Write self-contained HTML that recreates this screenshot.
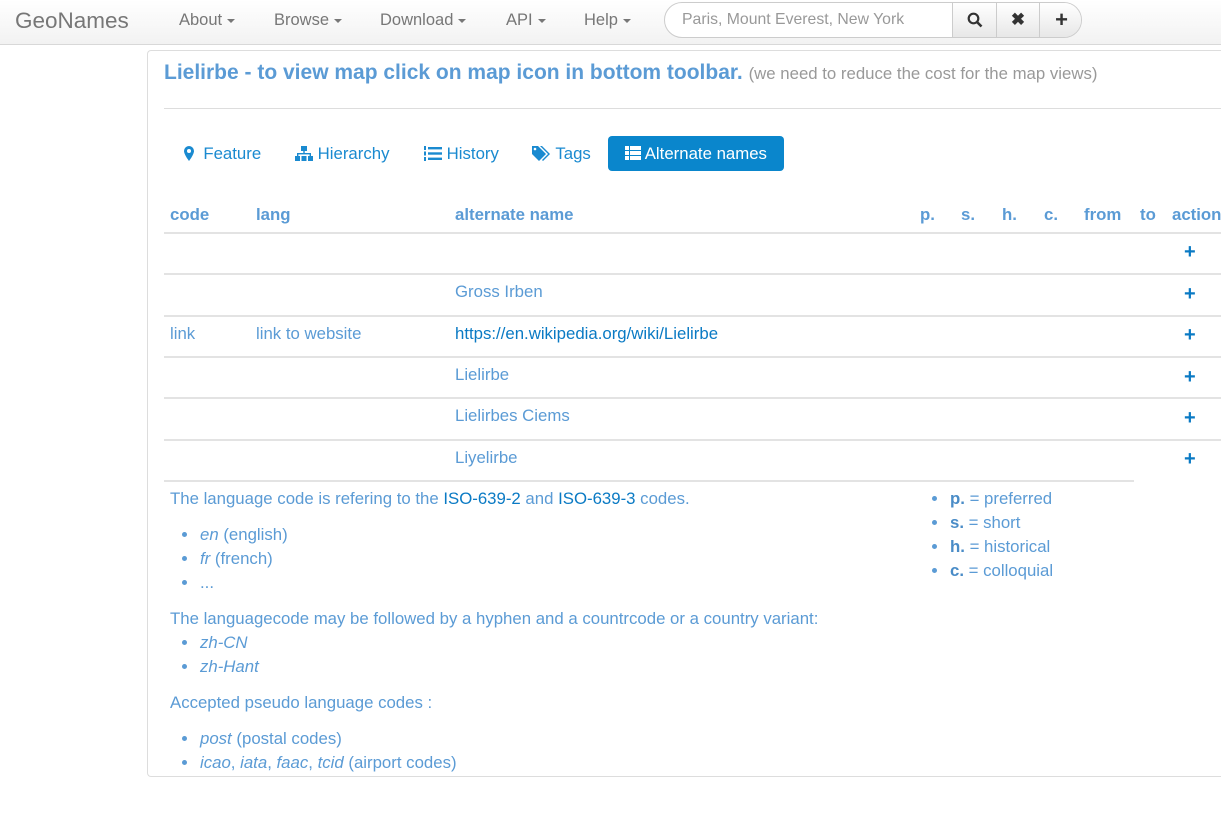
<!DOCTYPE html>
<html><head><meta charset="utf-8">
<style>
*{box-sizing:border-box;margin:0;padding:0}
body{width:1221px;height:814px;overflow:hidden;background:#fff;font-family:"Liberation Sans",Arial,sans-serif;font-size:16.8px;color:#5b9bd5;position:relative}
.a{position:absolute;white-space:nowrap}
.nav{position:absolute;left:0;top:0;width:1221px;height:45px;background:linear-gradient(#fff,#f2f2f2);border-bottom:1px solid #d8d8d8}
.nav .a{color:#777;font-size:16.5px;top:11px}
.caret{display:inline-block;border-top:4px solid #777;border-left:4px solid transparent;border-right:4px solid transparent;vertical-align:middle;margin-left:5px}
.search{position:absolute;left:664px;top:2px;width:418px;height:36px;border:1px solid #ccc;border-radius:18px;background:#fff;overflow:hidden}
.search .in{position:absolute;left:17px;top:8px;color:#999;font-size:15.8px}
.btn{position:absolute;top:0;height:36px;background:linear-gradient(#fff,#e6e6e6);border-left:1px solid #ccc;color:#333;font-weight:bold;text-align:center;line-height:34px;font-size:17px}
.panel{position:absolute;left:147px;top:50px;width:1080px;height:727px;border:1px solid #ddd;border-right:none;border-radius:4px 0 0 4px}
.hr{position:absolute;height:1px;background:#ddd}
.tab{position:absolute;top:144px;color:#1a8ad0}
.th{position:absolute;top:205px;font-weight:bold;color:#5b9bd5}
.plus{position:absolute;left:1184px;color:#0a7ac4;font-weight:bold;font-size:20px}
.lk{color:#0a7ac4}
.b{position:absolute;width:5px;height:5px;border-radius:50%;background:#5b9bd5}
</style></head><body>
<div class="nav">
<div class="a" style="left:15px;top:8px;font-size:22.5px;color:#777">GeoNames</div>
<div class="a" style="left:179px">About<span class="caret"></span></div>
<div class="a" style="left:274px">Browse<span class="caret"></span></div>
<div class="a" style="left:380px">Download<span class="caret"></span></div>
<div class="a" style="left:506px">API<span class="caret"></span></div>
<div class="a" style="left:584px">Help<span class="caret"></span></div>
<div class="search"><div class="in">Paris, Mount Everest, New York</div>
<div class="btn" style="left:287px;width:44px"><svg width="16" height="16" viewBox="0 0 16 16" style="margin-top:9px"><circle cx="6.5" cy="6.5" r="4.8" fill="none" stroke="#333" stroke-width="2.2"/><path d="M10 10l4.5 4.5" stroke="#333" stroke-width="2.6"/></svg></div>
<div class="btn" style="left:331px;width:43px">✖</div>
<div class="btn" style="left:374px;width:44px;font-size:22px">+</div>
</div>
</div>
<div class="panel"></div>
<div class="a" style="left:164px;top:61px;font-size:21px;font-weight:bold;color:#5b9bd5">Lielirbe - to view map click on map icon in bottom toolbar. <span style="font-weight:normal;font-size:16.8px;color:#999">(we need to reduce the cost for the map views)</span></div>
<div class="hr" style="left:164px;top:108px;width:1057px"></div>

<div class="tab" style="left:184px"><svg width="10" height="15" viewBox="0 0 10 15" style="vertical-align:-2px"><path d="M5 0a5 5 0 0 0-5 5c0 3.5 5 10 5 10s5-6.5 5-10a5 5 0 0 0-5-5z" fill="#1a8ad0"/><circle cx="5" cy="5" r="2" fill="#fff"/></svg>&nbsp; Feature</div>
<div class="tab" style="left:295px"><svg width="18" height="15" viewBox="0 0 18 15" style="vertical-align:-2px"><rect x="6" y="0" width="6" height="5" fill="#1a8ad0"/><rect x="8.3" y="5" width="1.4" height="3" fill="#1a8ad0"/><rect x="2" y="7" width="14" height="1.4" fill="#1a8ad0"/><rect x="2" y="7" width="1.4" height="3" fill="#1a8ad0"/><rect x="14.6" y="7" width="1.4" height="3" fill="#1a8ad0"/><rect x="0" y="10" width="5" height="5" fill="#1a8ad0"/><rect x="6.5" y="10" width="5" height="5" fill="#1a8ad0"/><rect x="13" y="10" width="5" height="5" fill="#1a8ad0"/></svg> Hierarchy</div>
<div class="tab" style="left:424px"><svg width="18" height="15" viewBox="0 0 18 15" style="vertical-align:-2px"><rect x="0" y="0" width="2" height="4" fill="#1a8ad0"/><rect x="0" y="5.5" width="2" height="4" fill="#1a8ad0"/><rect x="0" y="11" width="2" height="4" fill="#1a8ad0"/><rect x="4" y="1" width="14" height="2.4" fill="#1a8ad0"/><rect x="4" y="6.3" width="14" height="2.4" fill="#1a8ad0"/><rect x="4" y="11.6" width="14" height="2.4" fill="#1a8ad0"/></svg> History</div>
<div class="tab" style="left:532px"><svg width="19" height="15" viewBox="0 0 19 15" style="vertical-align:-2px"><path d="M0 0h6l8 8-7 7-7-7z" fill="#1a8ad0"/><circle cx="3" cy="3" r="1.3" fill="#fff"/><path d="M8 0h2l8 8-7 7-1-1 6-6z" fill="#1a8ad0"/></svg> Tags</div>
<div class="a" style="left:608px;top:136px;width:176px;height:35px;background:#0a86cc;border-radius:4px;color:#fff;padding:8px 0 0 17px"><svg width="16" height="14" viewBox="0 0 16 14" style="vertical-align:-1px"><rect x="0" y="0" width="4" height="4" fill="#fff"/><rect x="5" y="0" width="11" height="4" fill="#fff"/><rect x="0" y="5" width="4" height="4" fill="#fff"/><rect x="5" y="5" width="11" height="4" fill="#fff"/><rect x="0" y="10" width="4" height="4" fill="#fff"/><rect x="5" y="10" width="11" height="4" fill="#fff"/></svg> Alternate names</div>

<div class="th" style="left:170px">code</div>
<div class="th" style="left:256px">lang</div>
<div class="th" style="left:455px">alternate name</div>
<div class="th" style="left:920px">p.</div>
<div class="th" style="left:961px">s.</div>
<div class="th" style="left:1002px">h.</div>
<div class="th" style="left:1044px">c.</div>
<div class="th" style="left:1084px">from</div>
<div class="th" style="left:1140px">to</div>
<div class="th" style="left:1172px">action</div>
<div class="hr" style="left:164px;top:232px;width:1057px;height:2px;background:#e3e3e3"></div>

<div class="plus" style="top:241px">+</div>
<div class="hr" style="left:164px;top:273px;width:1057px;height:2px;background:#e3e3e3"></div>
<div class="a" style="left:455px;top:282px">Gross Irben</div><div class="plus" style="top:283px">+</div>
<div class="hr" style="left:164px;top:315px;width:1057px;height:2px;background:#e3e3e3"></div>
<div class="a" style="left:170px;top:324px">link</div><div class="a" style="left:256px;top:324px">link to website</div><div class="a lk" style="left:455px;top:324px">https://en.wikipedia.org/wiki/Lielirbe</div><div class="plus" style="top:324px">+</div>
<div class="hr" style="left:164px;top:356px;width:1057px;height:2px;background:#e3e3e3"></div>
<div class="a" style="left:455px;top:365px">Lielirbe</div><div class="plus" style="top:366px">+</div>
<div class="hr" style="left:164px;top:397px;width:1057px;height:2px;background:#e3e3e3"></div>
<div class="a" style="left:455px;top:406px">Lielirbes Ciems</div><div class="plus" style="top:407px">+</div>
<div class="hr" style="left:164px;top:439px;width:1057px;height:2px;background:#e3e3e3"></div>
<div class="a" style="left:455px;top:448px">Liyelirbe</div><div class="plus" style="top:448px">+</div>
<div class="hr" style="left:164px;top:480px;width:970px;height:2px;background:#e3e3e3"></div>

<div class="a" style="left:170px;top:489px">The language code is refering to the <span class="lk">ISO-639-2</span> and <span class="lk">ISO-639-3</span> codes.</div>
<div class="b" style="left:182px;top:532px"></div><div class="a" style="left:200px;top:525px"><i>en</i> (english)</div>
<div class="b" style="left:182px;top:556px"></div><div class="a" style="left:200px;top:549px"><i>fr</i> (french)</div>
<div class="b" style="left:182px;top:580px"></div><div class="a" style="left:200px;top:573px">...</div>
<div class="a" style="left:170px;top:609px">The languagecode may be followed by a hyphen and a countrcode or a country variant:</div>
<div class="b" style="left:182px;top:640px"></div><div class="a" style="left:200px;top:633px"><i>zh-CN</i></div>
<div class="b" style="left:182px;top:664px"></div><div class="a" style="left:200px;top:657px"><i>zh-Hant</i></div>
<div class="a" style="left:170px;top:693px">Accepted pseudo language codes :</div>
<div class="b" style="left:182px;top:736px"></div><div class="a" style="left:200px;top:729px"><i>post</i> (postal codes)</div>
<div class="b" style="left:182px;top:760px"></div><div class="a" style="left:200px;top:753px"><i>icao</i>, <i>iata</i>, <i>faac</i>, <i>tcid</i> (airport codes)</div>

<div class="b" style="left:932px;top:496px"></div><div class="a" style="left:950px;top:489px"><b style="color:#4a8cc7">p.</b> = preferred</div>
<div class="b" style="left:932px;top:520px"></div><div class="a" style="left:950px;top:513px"><b style="color:#4a8cc7">s.</b> = short</div>
<div class="b" style="left:932px;top:544px"></div><div class="a" style="left:950px;top:537px"><b style="color:#4a8cc7">h.</b> = historical</div>
<div class="b" style="left:932px;top:568px"></div><div class="a" style="left:950px;top:561px"><b style="color:#4a8cc7">c.</b> = colloquial</div>
</body></html>
